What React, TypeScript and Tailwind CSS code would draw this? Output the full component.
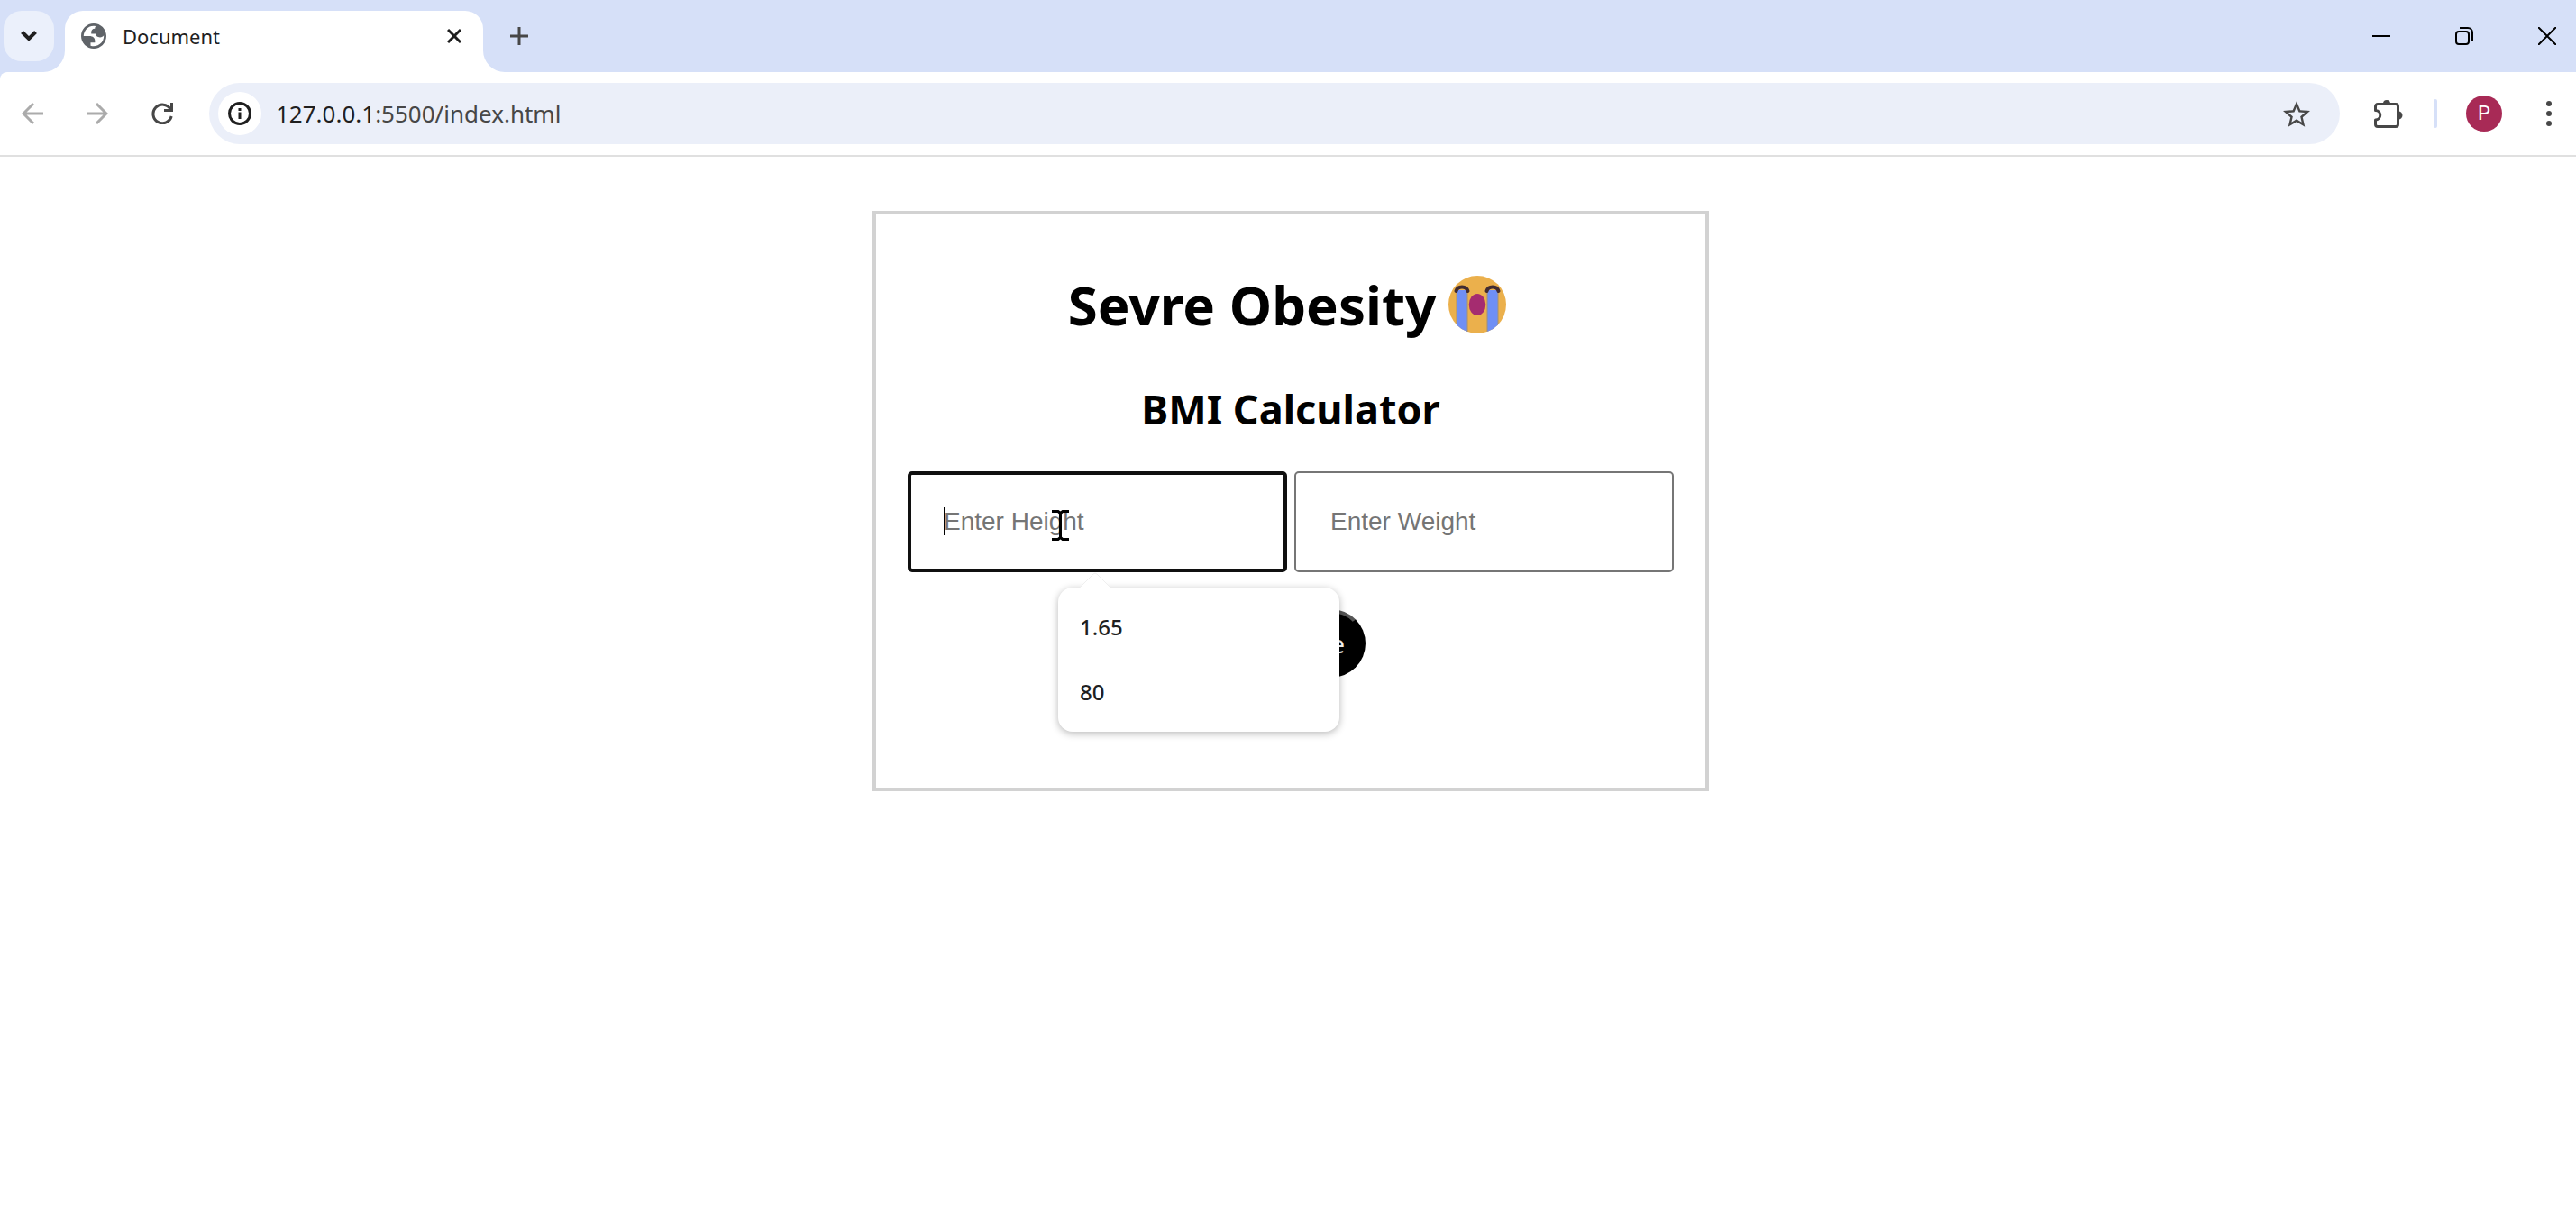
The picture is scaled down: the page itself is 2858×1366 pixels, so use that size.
import { useState } from "react";

const ui = "font-['Noto_Sans',sans-serif]";

function TabStrip() {
  return (
    <header className="flex h-20 items-start bg-[#d6e0f8] pl-1 pt-3">
      <button type="button" aria-label="Search tabs" className="grid size-14 place-items-center rounded-[20px] bg-[#ebf0fb]">
        <svg width="20" height="14" viewBox="0 0 20 14" fill="none" stroke="#1f1f1f" strokeWidth="4">
          <path d="M2.500 2.500 10 10l7.500-7.500" />
        </svg>
      </button>
      <div className="relative ml-3 flex h-[68px] w-[464px] rounded-t-[20px] bg-white pb-3 pl-[18px] pr-6">
        <svg className="absolute -left-6 bottom-0" width="24" height="24" viewBox="0 0 24 24">
          <path d="M24 0v24H0A24 24 0 0 0 24 0Z" fill="#fff" />
        </svg>
        <svg className="absolute -right-6 bottom-0" width="24" height="24" viewBox="0 0 24 24">
          <path d="M0 0v24h24A24 24 0 0 1 0 0Z" fill="#fff" />
        </svg>
        <div className="flex flex-1 items-center">
          <svg width="28" height="28" viewBox="2 2 20 20" fill="#5f6368" fillRule="evenodd">
            <path d="M12 2C6.480 2 2 6.480 2 12s4.480 10 10 10 10-4.480 10-10S17.520 2 12 2ZM4 12h4.400c3.407.022 4.922 1.730 4.543 5.127H9.488v2.470a8.004 8.004 0 0 0 10.498-8.083C19.327 12.504 18.332 13 17 13c-2.137 0-3.206-.916-3.206-2.750h-3.748c-.274-2.728.683-4.092 2.870-4.092 0-.975.327-1.597.811-1.970A8.004 8.004 0 0 0 4 12Z" />
          </svg>
          <span className="ml-[18px] text-[22px] leading-8 text-[#1f1f1f]">Document</span>
          <button type="button" aria-label="Close tab" className="ml-auto">
            <svg width="16" height="16" viewBox="0 0 16 16" stroke="#1f1f1f" strokeWidth="3">
              <path d="m1 1 14 14M15 1 1 15" />
            </svg>
          </button>
        </div>
      </div>
      <button type="button" aria-label="New tab" className="ml-[30px] grid h-14 place-items-center">
        <svg width="20" height="20" viewBox="0 0 20 20" stroke="#474747" strokeWidth="3">
          <path d="M10 0v20M0 10h20" />
        </svg>
      </button>
      <div className="ml-auto flex h-14 items-center gap-[72px] pr-[22px]">
        <button type="button" aria-label="Minimize">
          <svg width="20" height="20" viewBox="0 0 20 20" stroke="#000" strokeWidth="2">
            <path d="M0 10h20" />
          </svg>
        </button>
        <button type="button" aria-label="Restore">
          <svg width="20" height="20" viewBox="0 0 20 20" fill="none" stroke="#000" strokeWidth="2">
            <rect x="1" y="5" width="14" height="14" rx="3" />
            <path d="M5 1h9a5 5 0 0 1 5 5v9" />
          </svg>
        </button>
        <button type="button" aria-label="Close window">
          <svg width="20" height="20" viewBox="0 0 20 20" stroke="#000" strokeWidth="2">
            <path d="m0 0 20 20M20 0 0 20" />
          </svg>
        </button>
      </div>
    </header>
  );
}

function Toolbar() {
  return (
    <div className="bg-[#d6e0f8]">
      <nav className="flex h-[94px] items-center rounded-tl-lg border-b-2 border-[#e0e0e0] bg-white pl-6 pr-[27px]">
        <div className="flex items-center gap-12">
          <button type="button" aria-label="Back">
            <svg width="24" height="24" viewBox="0 0 24 24" fill="none" stroke="#ababab" strokeWidth="3">
              <path d="M24 12H2M13 1 2 12l11 11" />
            </svg>
          </button>
          <button type="button" aria-label="Forward">
            <svg width="24" height="24" viewBox="0 0 24 24" fill="none" stroke="#ababab" strokeWidth="3">
              <path d="M0 12h22M11 1l11 11-11 11" />
            </svg>
          </button>
          <button type="button" aria-label="Reload">
            <svg width="24" height="24" viewBox="0 0 24 24" fill="none" stroke="#474747" strokeWidth="3">
              <path d="M21 7a10.300 10.300 0 1 0 1.200 8" />
              <path d="M22.500 0v8.500H14" />
            </svg>
          </button>
        </div>
        <div className="ml-10 flex h-[68px] flex-1 items-center rounded-full bg-[#ebeff9] pl-[10px] pr-[33px]">
          <button type="button" aria-label="View site information" className="grid size-12 place-items-center rounded-full bg-white">
            <svg width="26" height="26" viewBox="0 0 26 26" fill="none" stroke="#1f1f1f" strokeWidth="3">
              <circle cx="13" cy="13" r="11.500" />
              <path d="M13 11.500V19M13 7v3" />
            </svg>
          </button>
          <a href="#" aria-label="Address" className="ml-4 flex-1 text-[26px] leading-9 text-[#474747]">
            <span className="text-[#1f1f1f]">127.0.0.1</span>:5500/index.html
          </a>
          <button type="button" aria-label="Bookmark this tab">
            <svg width="30" height="29" viewBox="2 2 20 19" fill="#474747">
              <path d="m22 9.240-7.190-.62L12 2 9.190 8.630 2 9.240l5.460 4.730L5.820 21 12 17.270 18.180 21l-1.630-7.030L22 9.240ZM12 15.400l-3.760 2.270 1-4.280-3.320-2.880 4.380-.38L12 6.100l1.710 4.040 4.380.38-3.320 2.880 1 4.280L12 15.400Z" />
            </svg>
          </button>
        </div>
        <button type="button" aria-label="Extensions" className="ml-[38px]">
          <svg width="32" height="32" viewBox="0 0 32 32" fill="none" stroke="#474747" strokeWidth="3">
            <path d="M1.500 12.500V8A2.500 2.500 0 0 1 4 5.500h20A2.500 2.500 0 0 1 26.500 8v20a2.500 2.500 0 0 1-2.500 2.500H4A2.500 2.500 0 0 1 1.500 28v-5a5.250 5.250 0 0 0 0-10.500Z" strokeLinejoin="round" />
            <path d="M10 5a4 4 0 0 1 8 0ZM27 13.500a4.500 4.500 0 0 1 0 9Z" fill="#474747" stroke="none" />
            <path d="M0 14.500h1.500a3.250 3.250 0 0 1 0 6.500H0Z" fill="#fff" stroke="none" />
          </svg>
        </button>
        <div className="ml-[34px] h-8 w-1 rounded-full bg-[#d6e0f8]" />
        <button type="button" aria-label="Profile" className="ml-8 grid size-10 place-items-center rounded-full bg-[#a82a56] font-['Roboto',sans-serif] text-[22px] leading-6 text-white">
          P
        </button>
        <button type="button" aria-label="Menu" className="ml-[49px]">
          <svg width="6" height="28" viewBox="0 0 6 28" fill="#474747">
            <circle cx="3" cy="3" r="3" />
            <circle cx="3" cy="14" r="3" />
            <circle cx="3" cy="25" r="3" />
          </svg>
        </button>
      </nav>
    </div>
  );
}

function CryingFace() {
  return (
    <svg width="64" height="64" viewBox="0 0 64 64" role="img" aria-label="Loudly crying face">
      <defs>
        <clipPath id="face">
          <circle cx="32" cy="32" r="32" />
        </clipPath>
      </defs>
      <circle cx="32" cy="32" r="32" fill="#ebb04c" />
      <g clipPath="url(#face)">
        <path d="M9 16h12v48H9zM43 16h12v48H43z" fill="#6f8ff5" />
        <path d="M9 16v48M21 16v48M43 16v48M55 16v48" stroke="#a09078" />
      </g>
      <path d="M8.500 17c1.500-6 11.500-6 13 0M42.500 17c1.500-6 11.500-6 13 0" fill="none" stroke="#402b32" strokeWidth="4" strokeLinecap="round" />
      <ellipse cx="32" cy="32" rx="9.300" ry="12" fill="#a52c70" />
    </svg>
  );
}

const field =
  "block h-28 w-full rounded-[5px] bg-white font-['Liberation_Sans',Arial,sans-serif] text-[28px] leading-8 text-black placeholder:text-[#757575] placeholder:opacity-100 outline-none";

function Suggestions({ onPick }: { onPick: (value: string) => void }) {
  return (
    <div className="absolute left-[167px] top-[129px] z-10 w-[312px] rounded-2xl bg-white py-2 shadow-[0_2px_8px_rgba(0,0,0,0.28)]">
      <svg className="absolute -top-[17px] left-6" width="34" height="18" viewBox="0 0 34 18">
        <path d="M0 17 15 2q2-2 4 0l15 15v1H0Z" fill="#fff" />
        <path d="M0 17 15 2q2-2 4 0l15 15" fill="none" stroke="#efefef" />
      </svg>
      {["1.65", "80"].map((value) => (
        <button
          key={value}
          type="button"
          onClick={() => onPick(value)}
          className="block h-[72px] w-full pl-6 text-left text-[24px] font-medium leading-8 text-[#1f1f1f]"
        >
          {value}
        </button>
      ))}
    </div>
  );
}

function Calculator() {
  const [height, setHeight] = useState("");
  const [weight, setWeight] = useState("");
  return (
    <main className="flex justify-center pl-[6px] pt-[60px]">
      <form
        onSubmit={(e) => e.preventDefault()}
        className="flex w-[928px] flex-col items-center border-4 border-[#d2d2d2] px-[35px] pb-[122px] pt-14 text-black"
      >
        <h1 className="flex items-center gap-3.5 pr-2 text-[60px] font-bold leading-[88px]">
          Sevre Obesity <CryingFace />
        </h1>
        <h2 className="mt-10 text-[45px] font-bold leading-[64px]">BMI Calculator</h2>
        <div className="mt-[37px] grid w-full grid-cols-2 gap-2">
          <div className="relative">
            <input
              aria-label="Height"
              placeholder="Enter Height"
              value={height}
              onChange={(e) => setHeight(e.target.value)}
              className={`${field} border-4 border-[#101010] px-9`}
            />
            <span className="absolute left-10 top-10 h-[31px] w-0.5 bg-black" />
            <svg className="absolute left-[160px] top-[43px]" width="19" height="34" viewBox="0 0 19 34" fill="none" stroke="#000" strokeWidth="3">
              <path d="M0 1.500h7l2.500 2 2.500-2h7M0 32.500h7l2.500-2 2.500 2h7M9.500 3v28" />
            </svg>
            <Suggestions onPick={setHeight} />
          </div>
          <input
            aria-label="Weight"
            placeholder="Enter Weight"
            value={weight}
            onChange={(e) => setWeight(e.target.value)}
            className={`${field} border-2 border-[#767676] px-[38px]`}
          />
        </div>
        <button
          type="submit"
          className="mt-[41px] h-[76px] w-[166px] rounded-[40px] border-4 border-b-black border-l-[#555] border-r-black border-t-[#555] bg-black text-[28px] leading-8 text-white"
        >
          Calculate
        </button>
      </form>
    </main>
  );
}

export default function App() {
  return (
    <div className={`min-h-screen bg-white ${ui}`}>
      <TabStrip />
      <Toolbar />
      <Calculator />
    </div>
  );
}
